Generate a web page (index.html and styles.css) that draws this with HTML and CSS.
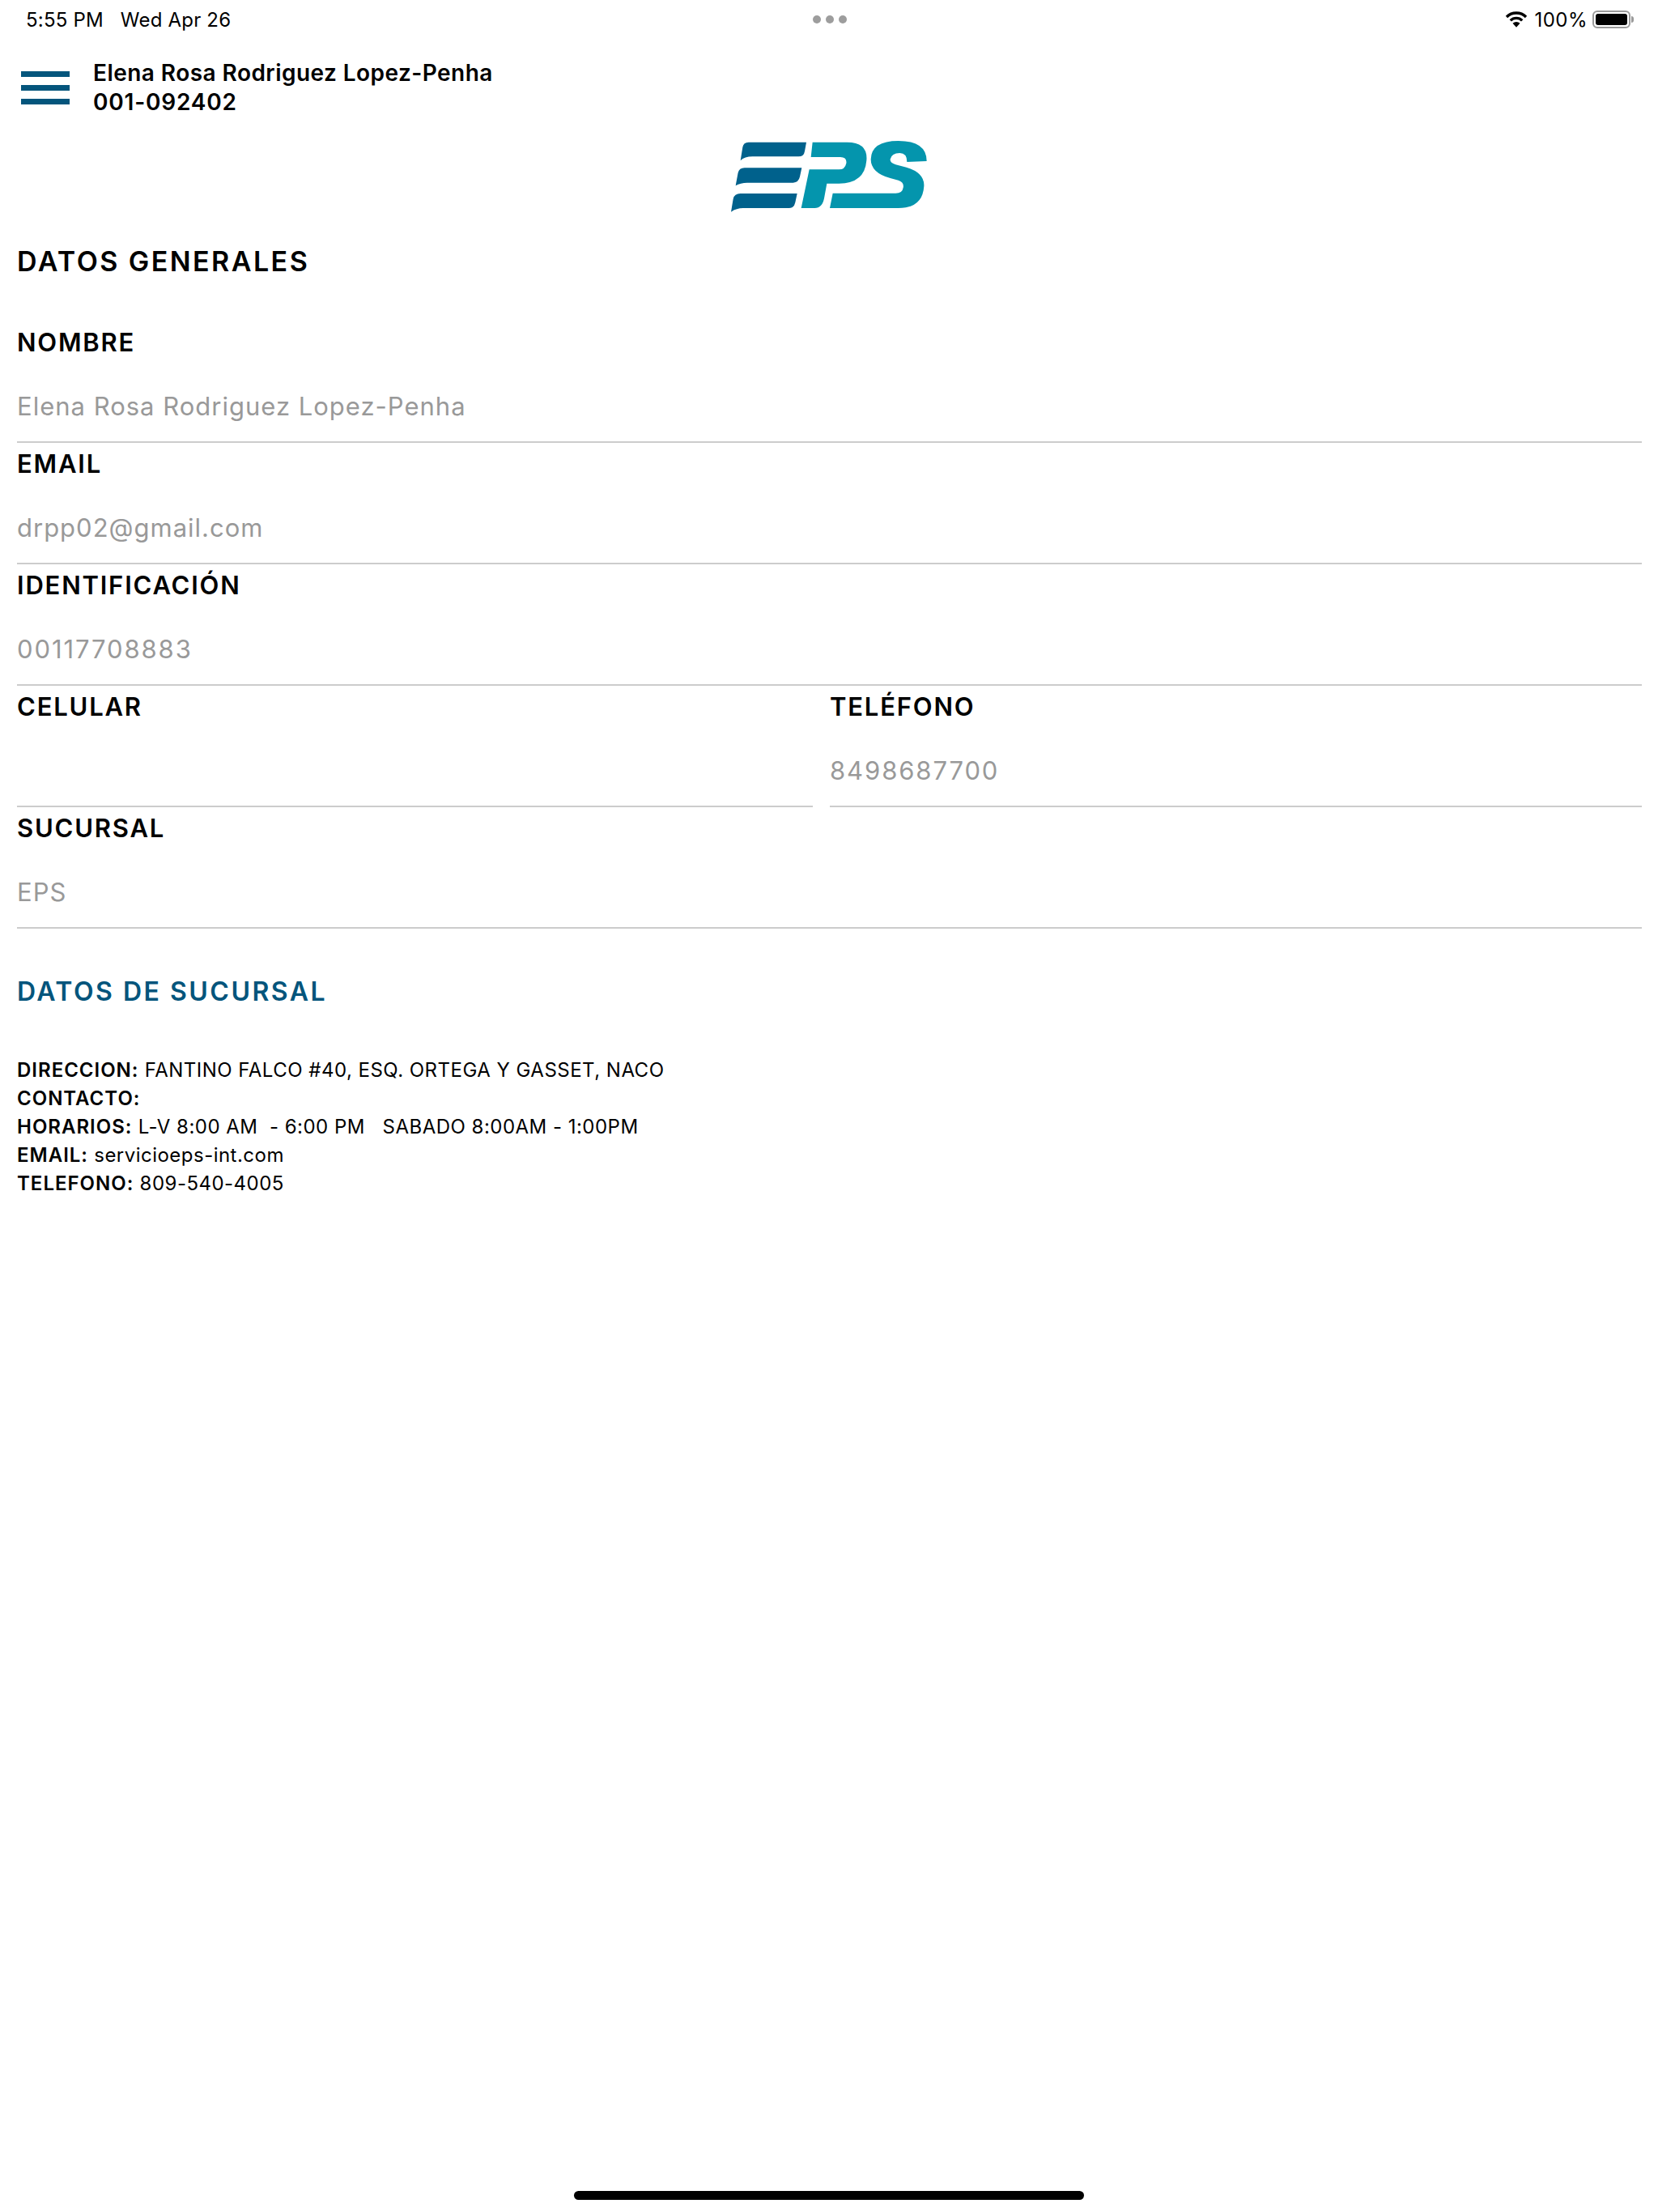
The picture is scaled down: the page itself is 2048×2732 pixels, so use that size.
FILE: index.html
```html
<!DOCTYPE html>
<html lang="en">
<head>
    <meta charset="UTF-8">
    <meta name="viewport" content="width=device-width, initial-scale=1.0">
    <title>Datos generales</title>
    <link rel="stylesheet" href="styles.css">
</head>
<body>

    <div class="status-bar">
        <div class="status-time"><span>5:55 PM</span><span>Wed Apr 26</span></div>
        <div class="status-dots"><i></i><i></i><i></i></div>
        <div class="status-right">
            <svg class="wifi" viewBox="0 0 28 20" width="28" height="20">
                <path d="M2 7A17 17 0 0 1 26 7" fill="none" stroke="#000" stroke-width="3.400"/>
                <path d="M6.800 11.400A10.200 10.200 0 0 1 21.200 11.400" fill="none" stroke="#000" stroke-width="3.400"/>
                <path d="M14 19.800L9.500 14.800A6.400 6.400 0 0 1 18.500 14.800Z" fill="#000"/>
            </svg>
            <span>100%</span>
            <div class="battery"><div class="battery-fill"></div></div>
            <div class="battery-nub"></div>
        </div>
    </div>

    <div class="user-row">
        <div class="menu-icon"><i></i><i></i><i></i></div>
        <div class="user-name">
            <div>Elena Rosa Rodriguez Lopez-Penha</div>
            <div class="user-code">001-092402</div>
        </div>
    </div>

    <div class="logo-row">
        <svg class="logo" viewBox="70 522 726 264" width="242" height="88">
            <g fill="#00618c">
                <path d="M135 527H349L343 560Q340 580 320 580H150Q120 580 105 595L113 545Q116 527 135 527Z"/>
                <path d="M120 622H332L325 655Q320 677 300 677H130Q105 677 87 688L96 640Q100 622 120 622Z"/>
                <path d="M105 717H315L308 750Q304 771 285 771H115Q90 771 70 785L78 737Q82 717 105 717Z"/>
            </g>
            <g fill="#0495ad">
                <path d="M372 527H500Q578 527 572 595Q565 680 470 680H425L415 735Q408 771 380 771H330L360 628H470Q492 628 497 605Q500 582 475 582H366Z"/>
                <path d="M795 597Q795 522 690 522Q590 522 588 590Q588 640 660 660L690 668Q712 675 708 695Q705 716 680 716H447L436 771H690Q780 771 785 690Q788 640 720 620L680 610Q658 603 660 590Q665 567 695 567Q722 567 722 600Z"/>
            </g>
        </svg>
    </div>

    <h1 class="section-title">DATOS GENERALES</h1>

    <div class="fields">
        <div class="field">
            <label>NOMBRE</label>
            <div class="value">Elena Rosa Rodriguez Lopez-Penha</div>
        </div>
        <div class="field">
            <label>EMAIL</label>
            <div class="value">drpp02@gmail.com</div>
        </div>
        <div class="field">
            <label>IDENTIFICACIÓN</label>
            <div class="value number">00117708883</div>
        </div>
        <div class="field-pair">
            <div class="field">
                <label>CELULAR</label>
                <div class="value"></div>
            </div>
            <div class="field">
                <label>TELÉFONO</label>
                <div class="value number">8498687700</div>
            </div>
        </div>
        <div class="field">
            <label>SUCURSAL</label>
            <div class="value">EPS</div>
        </div>
    </div>

    <h2 class="branch-title">DATOS DE SUCURSAL</h2>

    <div class="branch-info">
        <p><b>DIRECCION:</b> FANTINO FALCO #40, ESQ. ORTEGA Y GASSET, NACO</p>
        <p><b>CONTACTO:</b></p>
        <p><b>HORARIOS:</b> L-V 8:00 AM &nbsp;- 6:00 PM &nbsp; SABADO 8:00AM - 1:00PM</p>
        <p><b>EMAIL:</b> servicioeps-int.com</p>
        <p><b>TELEFONO:</b> 809-540-4005</p>
    </div>

    <div class="home-bar"></div>

</body>
</html>
```

FILE: styles.css
```css
body {
    margin: 0;
    height: 2732px;
    position: relative;
    overflow: hidden;
    background: #fff;
    color: #000;
    font-family: 'Inter', 'Liberation Sans', sans-serif;
}

/* Status bar */
.status-bar {
    height: 48px;
    display: grid;
    grid-template-columns: 1fr auto 1fr;
    align-items: center;
    padding: 0 30px 0 32px;
    font-size: 24px;
    letter-spacing: 0.2px;
}
.status-time {
    display: flex;
    gap: 21px;
}
.status-dots {
    display: flex;
    gap: 6px;
}
.status-dots i {
    width: 10px;
    height: 10px;
    border-radius: 50%;
    background-color: #9d9d9d;
}
.status-right {
    display: flex;
    align-items: center;
    justify-content: flex-end;
    letter-spacing: 0.5px;
}
.wifi {
    margin-right: 8px;
}
.battery {
    width: 47px;
    height: 22px;
    box-sizing: border-box;
    margin-left: 6px;
    padding: 2px;
    border: 2px solid #9a9a9a;
    border-radius: 6px;
}
.battery-fill {
    height: 100%;
    background-color: #000;
    border-radius: 3px;
}
.battery-nub {
    width: 3px;
    height: 8px;
    margin-left: 1px;
    background-color: #9a9a9a;
    border-radius: 0 3px 3px 0;
}

/* User row */
.user-row {
    display: flex;
    align-items: center;
    gap: 29px;
    height: 72px;
    margin-top: 24px;
    padding-left: 26px;
}
.menu-icon {
    display: flex;
    flex-direction: column;
    gap: 10px;
    width: 60px;
}
.menu-icon i {
    height: 7px;
    background-color: #04557c;
}
.user-name {
    font-size: 28px;
    font-weight: 600;
    line-height: 36px;
    letter-spacing: 0.45px;
}
.user-code {
    letter-spacing: 0.8px;
}

/* Logo */
.logo-row {
    display: flex;
    justify-content: center;
    padding-top: 30px;
}
.logo {
    display: block;
}

.section-title {
    margin: 0;
    padding: 41px 21px 0;
    font-size: 34px;
    line-height: 40px;
    font-weight: 600;
    letter-spacing: 2.45px;
}

/* Form fields */
.fields {
    display: flex;
    flex-direction: column;
    padding: 0 20px 0 21px;
    margin-top: 54px;
}
.field {
    height: 150px;
    box-sizing: border-box;
    border-bottom: 2px solid #ccc;
}
.field-pair {
    display: grid;
    grid-template-columns: 983px 1003px;
    gap: 21px;
}
.field label {
    display: block;
    font-size: 31px;
    line-height: 36px;
    font-weight: 600;
    letter-spacing: 1.8px;
    margin-top: 8px;
}
.value {
    margin-top: 43px;
    font-size: 31px;
    line-height: 36px;
    color: #999;
    letter-spacing: 1px;
}
.value.number {
    letter-spacing: 1.9px;
}

/* Branch info */
.branch-title {
    margin: 0;
    padding: 59px 21px 0;
    font-size: 32px;
    line-height: 38px;
    font-weight: 600;
    color: #04557c;
    letter-spacing: 2.5px;
}
.branch-info {
    padding: 60px 21px 0;
    font-size: 24px;
    line-height: 35px;
    letter-spacing: 0.48px;
}
.branch-info p {
    margin: 0;
}
.branch-info b {
    font-weight: 600;
    letter-spacing: 1px;
}

.home-bar {
    position: absolute;
    left: 709px;
    bottom: 15px;
    width: 630px;
    height: 11px;
    background-color: #000;
    border-radius: 6px;
}
```
